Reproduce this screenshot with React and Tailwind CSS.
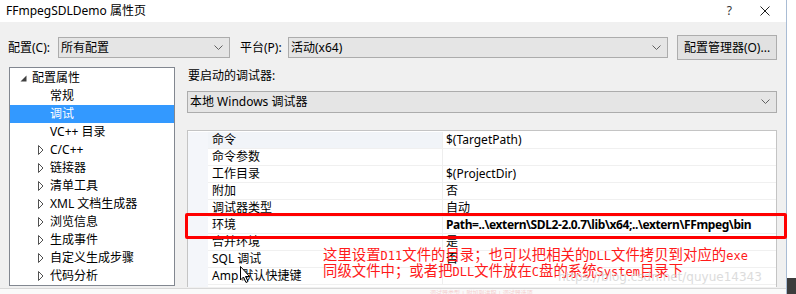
import React from 'react';

const ui = "font-['Noto_Sans','Noto_Sans_CJK_SC',sans-serif]";

function Chevron() {
    return (
        <svg width="9" height="6" viewBox="0 0 9 6" className="shrink-0">
            <polyline points="0.5,0.5 4.5,4.5 8.5,0.5" fill="none" stroke="#606060" strokeWidth="1" />
        </svg>
    );
}

function Combo({ text, width, height = 'h-[21px]' }) {
    return (
        <div className={`${width} ${height} flex items-center justify-between bg-[#e5e5e5] border border-[#acacac] pl-[2px] pr-[6px] text-[12px] text-black`}>
            <span>{text}</span>
            <Chevron />
        </div>
    );
}

function TreeIcon({ open }) {
    if (open) {
        return (
            <svg width="7" height="7" viewBox="0 0 7 7">
                <polygon points="6.5,0.5 6.5,6.5 0.5,6.5" fill="#404040" />
            </svg>
        );
    }
    return (
        <svg width="6" height="10" viewBox="0 0 6 10">
            <polygon points="0.5,0.5 5,5 0.5,9.5" fill="white" stroke="#505050" strokeWidth="1" />
        </svg>
    );
}

function Tree() {
    const items = [
        { label: '配置属性', level: 0, icon: 'open' },
        { label: '常规', level: 1 },
        { label: '调试', level: 1, selected: true },
        { label: 'VC++ 目录', level: 1 },
        { label: 'C/C++', level: 1, icon: 'closed' },
        { label: '链接器', level: 1, icon: 'closed' },
        { label: '清单工具', level: 1, icon: 'closed' },
        { label: 'XML 文档生成器', level: 1, icon: 'closed' },
        { label: '浏览信息', level: 1, icon: 'closed' },
        { label: '生成事件', level: 1, icon: 'closed' },
        { label: '自定义生成步骤', level: 1, icon: 'closed' },
        { label: '代码分析', level: 1, icon: 'closed' },
    ];

    return (
        <div className="ml-[9px] w-[166px] h-[219px] bg-white border border-[#828790] pt-[1px]">
            {items.map((item) => (
                <div
                    key={item.label}
                    className={`h-[18px] flex items-center ${item.level === 0 ? 'pl-[10px]' : 'pl-[28px]'} ${item.selected ? 'bg-[#3399ff] text-white' : 'text-black'}`}
                >
                    <span className="w-[12px] flex items-center">
                        {item.icon && <TreeIcon open={item.icon === 'open'} />}
                    </span>
                    <span className="text-[12px] leading-none">{item.label}</span>
                </div>
            ))}
        </div>
    );
}

function PropertyGrid() {
    const rows = [
        { name: '命令', value: '$(TargetPath)', tinted: true },
        { name: '命令参数', value: '' },
        { name: '工作目录', value: '$(ProjectDir)' },
        { name: '附加', value: '否' },
        { name: '调试器类型', value: '自动' },
        { name: '环境', value: 'Path=..\\extern\\SDL2-2.0.7\\lib\\x64;..\\extern\\FFmpeg\\bin', bold: true },
        { name: '合并环境', value: '是' },
        { name: 'SQL 调试', value: '否' },
        { name: 'Amp 默认快捷键', value: '' },
    ];

    return (
        <div className="mt-[17px] w-[590px] h-[157px] bg-white border border-[#c4c4c4] border-b-0 pt-[1px] flex">
            <div className="w-[20px] bg-[#f4f6fa]" />
            <div className="flex-1 flex flex-col">
                {rows.map((row) => (
                    <div key={row.name} className="h-[17px] flex text-[12px] text-black border-b border-[#f0f0f0]">
                        <div className={`w-[235px] pl-[4px] flex items-center border-r border-[#eeeeee] ${row.tinted ? 'bg-[#f1f4f8]' : ''}`}>
                            {row.name}
                        </div>
                        <div className={`flex-1 pl-[3px] flex items-center whitespace-nowrap ${row.bold ? 'font-bold tracking-[-0.4px]' : ''}`}>
                            {row.value}
                        </div>
                    </div>
                ))}
            </div>
        </div>
    );
}

function Latin({ children }) {
    return <span className="font-['DejaVu_Sans_Mono',monospace] text-[12px]">{children}</span>;
}

export default function App() {
    return (
        <div className={`relative w-[796px] h-[294px] overflow-hidden flex bg-white ${ui}`}>
            <div className="w-[787px] flex flex-col bg-[#f0f0f0] border-r border-[#a9bcd4]">
                <div className="h-[22px] shrink-0 bg-white flex items-center justify-between pl-[6px] pr-[16px] text-[12px] text-black">
                    <span>FFmpegSDLDemo 属性页</span>
                    <div className="flex items-center gap-[28px]">
                        <span className="text-[12px] text-[#333]">?</span>
                        <svg width="10" height="10" viewBox="0 0 10 10">
                            <path d="M0.5 0.5 L9.5 9.5 M9.5 0.5 L0.5 9.5" stroke="#202020" strokeWidth="1" />
                        </svg>
                    </div>
                </div>

                <div className="mt-[13px] h-[25px] flex items-center text-[12px] text-black">
                    <span className="pl-[8px] w-[58px]">配置(C):</span>
                    <Combo text="所有配置" width="w-[172px]" />
                    <span className="ml-[10px] w-[48px]">平台(P):</span>
                    <Combo text="活动(x64)" width="w-[380px]" />
                    <div className="ml-[9px] w-[100px] h-[25px] flex items-center justify-center bg-[#e1e1e1] border border-[#adadad]">
                        配置管理器(O)...
                    </div>
                </div>

                <div className="mt-[7px] flex">
                    <Tree />
                    <div className="ml-[12px] flex flex-col">
                        <div className="h-[18px] pl-[1px] flex items-center text-[12px] text-black">要启动的调试器:</div>
                        <div className="mt-[6px]">
                            <Combo text="本地 Windows 调试器" width="w-[590px]" height="h-[22px]" />
                        </div>
                        <PropertyGrid />
                    </div>
                </div>

                <div className="flex-1 mt-[1px] bg-[#fafafa] border-t border-[#d8d8d8] flex items-start pl-[430px] pt-[1px] text-[6px] text-[#f3d0d0] leading-[6px] overflow-hidden">
                    调试器类型 | 附加到进程 | 调试器选项
                </div>
            </div>

            <div className="flex-1 flex flex-col">
                <div className="flex-1 bg-white" />
                <div className="h-[16px] bg-[#3c3c3c]" />
            </div>

            {/* red annotation over the environment row */}
            <div className="absolute left-[185px] top-[213px] w-[602px] h-[26px] border-[3px] border-[#ff0000] rounded-[2px]" />

            <div className="absolute left-[323px] top-[247px] text-[14.4px] leading-[14px] text-[#ff1a1a] font-['Noto_Sans_CJK_SC',sans-serif] whitespace-nowrap">
                <div>这里设置<Latin>D11</Latin>文件的目录；也可以把相关的<Latin>DLL</Latin>文件拷贝到对应的<Latin>exe</Latin></div>
                <div>同级文件中；或者把<Latin>DLL</Latin>文件放在<Latin>C</Latin>盘的系统<Latin>System</Latin>目录下</div>
            </div>

            <div className="absolute left-[558px] top-[268px] text-[12px] text-[#d4d4d4] opacity-80 font-['DejaVu_Sans',sans-serif] whitespace-nowrap">
                https://blog.csdn.net/quyue14343
            </div>

            <svg className="absolute left-[240px] top-[266px]" width="11" height="18" viewBox="0 0 11 18">
                <path d="M0.5 0.5 L0.5 14 L3.5 11 L6 16.5 L8 15.5 L5.5 10.5 L9.5 10.5 Z" fill="white" stroke="black" strokeWidth="1" />
            </svg>
        </div>
    );
}
